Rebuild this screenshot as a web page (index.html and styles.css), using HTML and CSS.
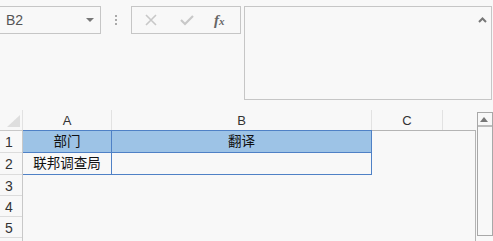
FILE: index.html
```html
<!DOCTYPE html>
<html lang="zh">
<head>
    <meta charset="UTF-8">
    <title>Sheet</title>
    <link rel="stylesheet" href="styles.css">
</head>
<body>
    <div class="toolbar">
        <div class="namebox">
            <span class="cellref">B2</span>
            <svg class="drop" width="8" height="5" viewBox="0 0 8 5"><path d="M0 0H8L4 4Z" fill="#777"/></svg>
        </div>
        <div class="dots"><span></span><span></span><span></span></div>
        <div class="fxbox">
            <svg class="ico" width="14" height="14" viewBox="0 0 14 14"><path d="M2 2L12 12M12 2L2 12" stroke="#c8c8c8" stroke-width="1.6" fill="none"/></svg>
            <svg class="ico" width="16" height="14" viewBox="0 0 16 14"><path d="M2 7L6 11L14 3" stroke="#c8c8c8" stroke-width="2.2" fill="none"/></svg>
            <span class="fx">f<span class="x">x</span></span>
        </div>
        <div class="bigbox">
            <svg class="caret" width="9" height="6" viewBox="0 0 9 6"><path d="M1 5L4.5 1.5L8 5" stroke="#777" stroke-width="2" fill="none"/></svg>
        </div>
    </div>

    <div class="sheet">
        <div class="grid-wrap">
            <div class="colheads">
                <div class="corner"><svg width="13" height="12" viewBox="0 0 13 12"><path d="M13 0V12H0Z" fill="#dedede"/></svg></div>
                <div class="colhead col-a">A</div>
                <div class="colhead col-b">B</div>
                <div class="colhead col-c">C</div>
                <div class="colhead col-d"></div>
            </div>
            <div class="body">
                <div class="rowheads">
                    <div class="rowhead tall">1</div>
                    <div class="rowhead tall">2</div>
                    <div class="rowhead">3</div>
                    <div class="rowhead">4</div>
                    <div class="rowhead">5</div>
                </div>
                <div class="cells">
                    <div class="tbl">
                        <div class="cell head col-a">部门</div>
                        <div class="cell head col-b">翻译</div>
                        <div class="cell col-a">联邦调查局</div>
                        <div class="cell col-b"></div>
                    </div>
                </div>
            </div>
        </div>
        <div class="vscroll">
            <div class="up"><svg width="8" height="5" viewBox="0 0 8 5"><path d="M0 5H8L4 0Z" fill="#777"/></svg></div>
        </div>
    </div>
</body>
</html>
```

FILE: styles.css
```css
body {
    margin: 0;
    background: #f8f8f8;
    font-family: "Liberation Sans", "Noto Sans CJK SC", sans-serif;
    color: #333;
    overflow: hidden;
    width: 493px;
    height: 241px;
}

/* top bar */
.toolbar {
    display: flex;
    align-items: flex-start;
    padding-top: 6px;
    height: 104px;
}
.namebox {
    box-sizing: border-box;
    width: 102px;
    height: 28px;
    margin-left: -1px;
    border: 1px solid #c6c6c6;
    display: flex;
    align-items: center;
    justify-content: space-between;
    padding: 0 6px 0 6px;
}
.cellref {
    font-size: 14px;
    color: #555;
}
.drop {
    margin-top: 1px;
}
.dots {
    width: 30px;
    height: 28px;
    display: flex;
    flex-direction: column;
    align-items: center;
    justify-content: center;
    gap: 2px;
}
.dots span {
    width: 2px;
    height: 2px;
    background: #aaa;
}
.fxbox {
    box-sizing: border-box;
    width: 110px;
    height: 28px;
    border: 1px solid #c6c6c6;
    display: flex;
    align-items: center;
    padding-left: 12px;
    gap: 21px;
}
.ico {
    display: block;
}
.fx {
    font-family: "Liberation Serif", serif;
    font-style: italic;
    font-weight: bold;
    font-size: 15px;
    color: #666;
    margin-left: -2px;
}
.fx .x {
    font-size: 11px;
}
.bigbox {
    box-sizing: border-box;
    width: 248px;
    height: 94px;
    margin-left: 3px;
    border: 1px solid #c6c6c6;
    display: flex;
    justify-content: flex-end;
    padding: 10px 4px 0 0;
}
.caret {
    display: block;
}

/* sheet */
.sheet {
    display: flex;
    height: 131px;
}
.grid-wrap {
    width: 479px;
}
.colheads {
    display: flex;
    height: 20px;
}
.corner {
    box-sizing: border-box;
    width: 23px;
    border-right: 1px solid #e2e2e2;
    display: flex;
    align-items: flex-end;
    padding: 0 0 3px 7px;
}
.colhead {
    box-sizing: border-box;
    border-right: 1px solid #e2e2e2;
    font-size: 13px;
    text-align: center;
    line-height: 22px;
}
.colheads .col-a { width: 89px; }
.colheads .col-b { width: 260px; }
.colheads .col-c { width: 71px; }
.colheads .col-d { flex: 1; border-right: none; }

.body {
    display: flex;
}
.rowheads {
    box-sizing: border-box;
    width: 23px;
    border-top: 1px solid #c8c8c8;
    border-right: 1px solid #c8c8c8;
}
.rowhead {
    height: 20px;
    border-bottom: 1px solid #dcdcdc;
    font-size: 14px;
    line-height: 22px;
    padding-left: 5px;
}
.rowhead.tall {
    height: 21px;
}
.cells {
    box-sizing: border-box;
    width: 453px;
    height: 111px;
    border-top: 1px solid #b4b4b4;
    border-right: 1px solid #b4b4b4;
}
.tbl {
    display: grid;
    width: 349px;
    grid-template-columns: 89px 260px;
    grid-template-rows: 22px 22px;
    margin-top: -1px;
    border-top: 1px solid #4f81c6;
}
.cell {
    box-sizing: border-box;
    border-right: 1px solid #4f81c6;
    border-bottom: 1px solid #4f81c6;
    font-size: 13.5px;
    color: #111;
    text-align: center;
    line-height: 21px;
}
.cell.head {
    background: #9dc3e6;
}

.vscroll {
    box-sizing: border-box;
    width: 16px;
    height: 124px;
    margin-top: 2px;
    border: 1px solid #a8a8a8;
}
.up {
    height: 12px;
    border-bottom: 2px solid #bdbdbd;
    display: flex;
    justify-content: center;
    align-items: center;
    padding-right: 2px;
}
.up svg {
    display: block;
}
```
